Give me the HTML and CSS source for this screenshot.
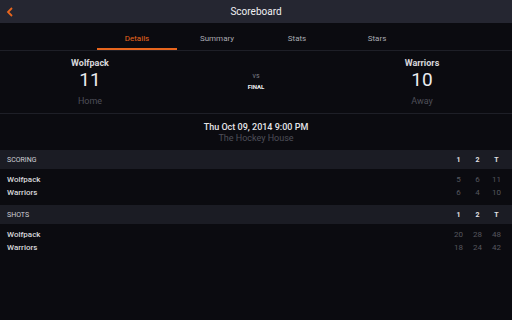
FILE: index.html
```html
<!DOCTYPE html>
<html>
<head>
<meta charset="utf-8">
<link rel="stylesheet" href="styles.css">
</head>
<body>
<header class="topbar">
  <span class="back"><svg width="8" height="10" viewBox="0 0 8 10"><path d="M6 1 L2 5 L6 9" fill="none" stroke="#e8661e" stroke-width="1.8"/></svg></span>
  <h1 class="title">Scoreboard</h1>
  <span></span>
</header>
<nav class="tabs">
  <span class="tab active">Details</span>
  <span class="tab">Summary</span>
  <span class="tab">Stats</span>
  <span class="tab">Stars</span>
</nav>
<section class="matchup">
  <div class="team">
    <div class="tname">Wolfpack</div>
    <div class="tscore">11</div>
    <div class="tside">Home</div>
  </div>
  <div class="mid">
    <div class="vs">vs</div>
    <div class="final">FINAL</div>
  </div>
  <div class="team">
    <div class="tname">Warriors</div>
    <div class="tscore">10</div>
    <div class="tside">Away</div>
  </div>
</section>
<section class="info">
  <div class="date">Thu Oct 09, 2014 9:00 PM</div>
  <div class="venue">The Hockey House</div>
</section>
<section class="table">
  <div class="thead"><span class="label">SCORING</span><span class="c">1</span><span class="c">2</span><span class="c">T</span></div>
  <div class="rows">
    <div class="row"><span class="label">Wolfpack</span><span class="c">5</span><span class="c">6</span><span class="c">11</span></div>
    <div class="row"><span class="label">Warriors</span><span class="c">6</span><span class="c">4</span><span class="c">10</span></div>
  </div>
</section>
<section class="table">
  <div class="thead"><span class="label">SHOTS</span><span class="c">1</span><span class="c">2</span><span class="c">T</span></div>
  <div class="rows">
    <div class="row"><span class="label">Wolfpack</span><span class="c">20</span><span class="c">28</span><span class="c">48</span></div>
    <div class="row"><span class="label">Warriors</span><span class="c">18</span><span class="c">24</span><span class="c">42</span></div>
  </div>
</section>
</body>
</html>
```
FILE: styles.css
```css
html, body {
  margin: 0;
  padding: 0;
  background: #0b0b10;
  color: #e6e6ea;
  font-family: Roboto, "Noto Sans", sans-serif;
  width: 512px;
  height: 320px;
  overflow: hidden;
}
.topbar {
  height: 23px;
  background: #252631;
  display: grid;
  grid-template-columns: 30px 1fr 30px;
  align-items: center;
}
.back {
  display: flex;
  padding-left: 6px;
}
.title {
  margin: 0;
  text-align: center;
  font-size: 10px;
  font-weight: 400;
  color: #f0f0f3;
}
.tabs {
  display: flex;
  padding-left: 97px;
  border-bottom: 1px solid #1e1f27;
  box-sizing: border-box;
  height: 28px;
}
.tab {
  width: 80px;
  display: flex;
  align-items: center;
  justify-content: center;
  font-size: 8px;
  color: #a9aab2;
  padding-top: 6px;
  box-sizing: border-box;
  border-bottom: 2px solid transparent;
}
.tab.active {
  color: #e8661e;
  border-bottom-color: #e8661e;
}
.matchup {
  height: 63px;
  display: grid;
  grid-template-columns: 180px 1fr 180px;
  border-bottom: 1px solid #1e1f27;
  box-sizing: border-box;
}
.team {
  display: flex;
  flex-direction: column;
  align-items: center;
  padding-top: 6px;
}
.tname {
  font-size: 9px;
  font-weight: 700;
  color: #d8d8dc;
  line-height: 12px;
}
.tscore {
  font-size: 19px;
  line-height: 22px;
  color: #ececef;
  font-weight: 400;
}
.tside {
  font-size: 9px;
  color: #4e4f59;
  line-height: 12px;
  margin-top: 4px;
}
.mid {
  display: flex;
  flex-direction: column;
  align-items: center;
  padding-top: 21px;
}
.vs {
  font-size: 7px;
  color: #7c7d86;
  line-height: 9px;
}
.final {
  font-size: 6px;
  font-weight: 700;
  color: #f2f2f4;
  line-height: 9px;
  margin-top: 1px;
}
.info {
  height: 36px;
  display: flex;
  flex-direction: column;
  align-items: center;
  padding-top: 8px;
  box-sizing: border-box;
}
.date {
  font-size: 9px;
  font-weight: 500;
  color: #e4e4e8;
  line-height: 11px;
}
.venue {
  font-size: 9px;
  color: #4e4f59;
  line-height: 10px;
}
.thead, .row {
  display: grid;
  grid-template-columns: 1fr 19px 19px 19px;
  padding: 0 6px 0 7px;
  align-items: center;
}
.thead {
  height: 19px;
  background: #1b1c24;
  font-size: 7px;
  color: #d0d0d5;
}
.thead .c {
  font-weight: 700;
  color: #e2e2e6;
}
.rows {
  padding: 4px 0 6px;
}
.row {
  height: 13px;
  font-size: 8px;
}
.row .label {
  color: #d8d8dc;
  font-weight: 500;
}
.row .c {
  color: #56575f;
}
.c {
  text-align: center;
}
```
